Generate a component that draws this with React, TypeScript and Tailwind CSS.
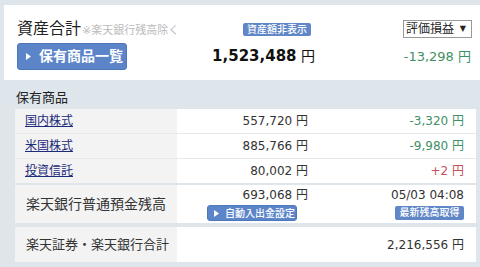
import React from "react";

const holdings = [
  { name: "国内株式", value: "557,720", pl: "-3,320", up: false },
  { name: "米国株式", value: "885,766", pl: "-9,980", up: false },
  { name: "投資信託", value: "80,002", pl: "+2", up: true },
];

const Arrow = () => (
  <svg width="5" height="7" viewBox="0 0 5 7" className="shrink-0">
    <path d="M0 0 L5 3.5 L0 7 Z" fill="#fff" />
  </svg>
);

export default function App() {
  return (
    <div className="w-[480px] h-[267px] overflow-hidden bg-[#dee5eb] pt-[5px] pl-[4px] text-[#333] font-['DejaVu_Sans','Noto_Sans_CJK_JP',sans-serif]">
      {/* summary card */}
      <div className="bg-white h-[75px] pl-[13px] pr-[8px] pt-[15px]">
        <div className="flex items-center h-[18px]">
          <div className="w-[226px] flex items-end">
            <span className="text-[16px] leading-[18px] text-[#222]">資産合計</span>
            <span className="text-[11px] leading-[14px] text-[#bbb] ml-[1px]">※楽天銀行残高除く</span>
          </div>
          <div className="w-[68px] h-[13px] rounded-[2px] bg-[#5f86c6] text-white text-[10px] leading-[13px] text-center font-medium">
            資産額非表示
          </div>
          <div className="flex-1" />
          <div className="w-[69px] h-[18px] border border-[#999] flex items-center justify-between pl-[2px] pr-[5px] text-[12px] text-[#222]">
            <span>評価損益</span>
            <span className="text-[8px]">▼</span>
          </div>
        </div>
        <div className="flex items-center h-[27px] mt-[5px]">
          <button className="w-[110px] h-[27px] rounded-[3px] bg-[#5b85c8] border border-[#4f78ba] flex items-center gap-[8px] pl-[8px] text-white text-[14px] font-semibold">
            <Arrow />
            <span>保有商品一覧</span>
          </button>
          <div className="w-[188px] text-right text-[15px] text-[#111]">
            <span className="font-bold">1,523,488</span>
            <span className="text-[14px]"> 円</span>
          </div>
          <div className="flex-1 text-right pr-[1px] text-[13px] text-[#3f9066]">-13,298 円</div>
        </div>
      </div>

      {/* holdings */}
      <div className="pl-[11px]">
        <div className="h-[29px] pt-[10px] pl-[1px] text-[13px] leading-[16px] text-[#222]">保有商品</div>
        <div className="w-[461px] flex flex-col gap-[1px] bg-[#e6e9ec]">
          {holdings.map((h) => (
            <div key={h.name} className="flex items-center h-[24px] text-[12px]">
              <div className="w-[162px] h-full bg-[#f3f3f3] pl-[10px] flex items-center">
                <span className="underline text-[#1c2a7a]">{h.name}</span>
              </div>
              <div className="flex-1 h-full bg-white flex items-center">
                <div className="w-[131px] text-right text-[#333]">{h.value} 円</div>
                <div className={"flex-1 text-right pr-[12px] " + (h.up ? "text-[#c4505a]" : "text-[#3f9066]")}>
                  {h.pl} 円
                </div>
              </div>
            </div>
          ))}
        </div>

        <div className="w-[461px] flex h-[38px] mt-[2px]">
          <div className="w-[162px] bg-[#f3f3f3] pl-[11px] flex items-center text-[14px] text-[#333]">
            楽天銀行普通預金残高
          </div>
          <div className="flex-1 bg-white flex">
            <div className="w-[131px] flex flex-col items-end pt-[3px]">
              <div className="text-[12px] leading-[14px] text-[#333]">693,068 円</div>
              <div className="mt-[3px] w-[90px] h-[16px] rounded-[3px] bg-[#5b85c8] border border-[#4f78ba] flex items-center gap-[6px] pl-[6px] text-white text-[10px] font-medium self-start ml-[30px]">
                <Arrow />
                <span>自動入出金設定</span>
              </div>
            </div>
            <div className="flex-1 flex flex-col items-end pr-[12px] pt-[3px]">
              <div className="text-[12px] leading-[14px] text-[#333]">05/03 04:08</div>
              <div className="mt-[4px] w-[69px] h-[14px] rounded-[2px] bg-[#5f86c6] text-white text-[10px] leading-[14px] text-center font-medium">
                最新残高取得
              </div>
            </div>
          </div>
        </div>

        <div className="w-[461px] flex h-[35px] mt-[4px]">
          <div className="w-[162px] bg-[#f3f3f3] pl-[11px] flex items-center text-[13px] text-[#333]">
            楽天証券・楽天銀行合計
          </div>
          <div className="flex-1 bg-white flex items-center justify-end pr-[12px] text-[12px] text-[#333]">
            2,216,556 円
          </div>
        </div>
      </div>
    </div>
  );
}
